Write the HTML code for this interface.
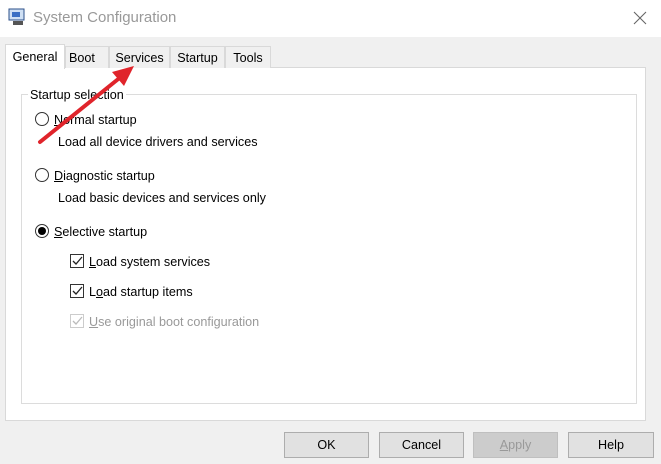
<!DOCTYPE html>
<html><head><style>
body{margin:0;width:661px;height:464px;background:#f0f0f0;font-family:"Liberation Sans",sans-serif;font-size:12.6px;color:#000;position:relative;overflow:hidden}
.a{position:absolute}
.title{left:0;top:0;width:661px;height:37px;background:#fff}
.tab{position:absolute;top:46px;height:22px;border:1px solid #d9d9d9;border-bottom:none;background:#f0f0f0;line-height:23px;text-align:center;box-sizing:border-box}
.panel{left:5px;top:67px;width:641px;height:354px;background:#fff;border:1px solid #d9d9d9;box-sizing:border-box}
.grp{left:21px;top:94px;width:616px;height:310px;border:1px solid #dcdcdc;box-sizing:border-box}
.rad{position:absolute;width:14px;height:14px;border:1px solid #333;border-radius:50%;box-sizing:border-box;background:#fff}
.cb{position:absolute;width:14px;height:14px;border:1px solid #333;box-sizing:border-box;background:#fff}
.btn{position:absolute;top:432px;height:26px;width:85px;border:1px solid #adadad;background:#e1e1e1;box-sizing:border-box;text-align:center;line-height:25px}
.t{position:absolute;margin-top:1px}
u{text-decoration:underline}
</style></head><body>
<div class="a title"></div>
<svg class="a" style="left:8px;top:7px" width="20" height="20"><rect x="1" y="2" width="15" height="11" fill="#cfe0f4" stroke="#2b4f8a"/><rect x="4" y="5" width="8" height="5" fill="#3a6fc4"/><rect x="5" y="14" width="10" height="4" fill="#555"/></svg>
<div class="a" style="left:33px;top:9px;font-size:15px;color:#999">System Configuration</div>
<svg class="a" style="left:633px;top:11px" width="14" height="14"><path d="M1 1 L13 13 M13 1 L1 13" stroke="#666" stroke-width="1.1"/></svg>
<div class="a panel"></div>
<div class="tab" style="left:65px;width:44px;text-align:left;padding-left:3px">Boot</div>
<div class="tab" style="left:109px;width:61px">Services</div>
<div class="tab" style="left:170px;width:55px">Startup</div>
<div class="tab" style="left:225px;width:46px">Tools</div>
<div class="tab" style="left:5px;top:44px;height:25px;width:60px;background:#fff;line-height:25px">General</div>
<div class="a grp"></div>
<div class="t" style="left:28px;top:87px;background:#fff;padding:0 2px">Startup selection</div>
<div class="rad" style="left:35px;top:112px"></div>
<div class="t" style="left:54px;top:112px"><u>N</u>ormal startup</div>
<div class="t" style="left:58px;top:134px">Load all device drivers and services</div>
<div class="rad" style="left:35px;top:168px"></div>
<div class="t" style="left:54px;top:168px"><u>D</u>iagnostic startup</div>
<div class="t" style="left:58px;top:190px">Load basic devices and services only</div>
<div class="rad" style="left:35px;top:224px"><div style="position:absolute;left:2px;top:2px;width:8px;height:8px;border-radius:50%;background:#000"></div></div>
<div class="t" style="left:54px;top:224px"><u>S</u>elective startup</div>
<div class="cb" style="left:70px;top:254px"><svg width="12" height="12" style="position:absolute;left:0;top:0"><path d="M2 6 L5 9 L11 2" stroke="#222" fill="none" stroke-width="1.3"/></svg></div>
<div class="t" style="left:89px;top:254px"><u>L</u>oad system services</div>
<div class="cb" style="left:70px;top:284px"><svg width="12" height="12" style="position:absolute;left:0;top:0"><path d="M2 6 L5 9 L11 2" stroke="#222" fill="none" stroke-width="1.3"/></svg></div>
<div class="t" style="left:89px;top:284px">L<u>o</u>ad startup items</div>
<div class="cb" style="left:70px;top:314px;border-color:#ccc"><svg width="12" height="12" style="position:absolute;left:0;top:0"><path d="M2 6 L5 9 L11 2" stroke="#bbb" fill="none" stroke-width="1.3"/></svg></div>
<div class="t" style="left:89px;top:314px;color:#999"><u>U</u>se original boot configuration</div>
<svg class="a" style="left:0;top:0" width="661" height="464"><line x1="40" y1="142" x2="122" y2="76" stroke="#e0242b" stroke-width="4" stroke-linecap="round"/><polygon points="134,66 112,72 124,86" fill="#e0242b"/></svg>
<div class="btn" style="left:284px">OK</div>
<div class="btn" style="left:379px">Cancel</div>
<div class="btn" style="left:473px;background:#ccc;border-color:#bfbfbf;color:#999"><u>A</u>pply</div>
<div class="btn" style="left:568px;width:86px">Help</div>
</body></html>
